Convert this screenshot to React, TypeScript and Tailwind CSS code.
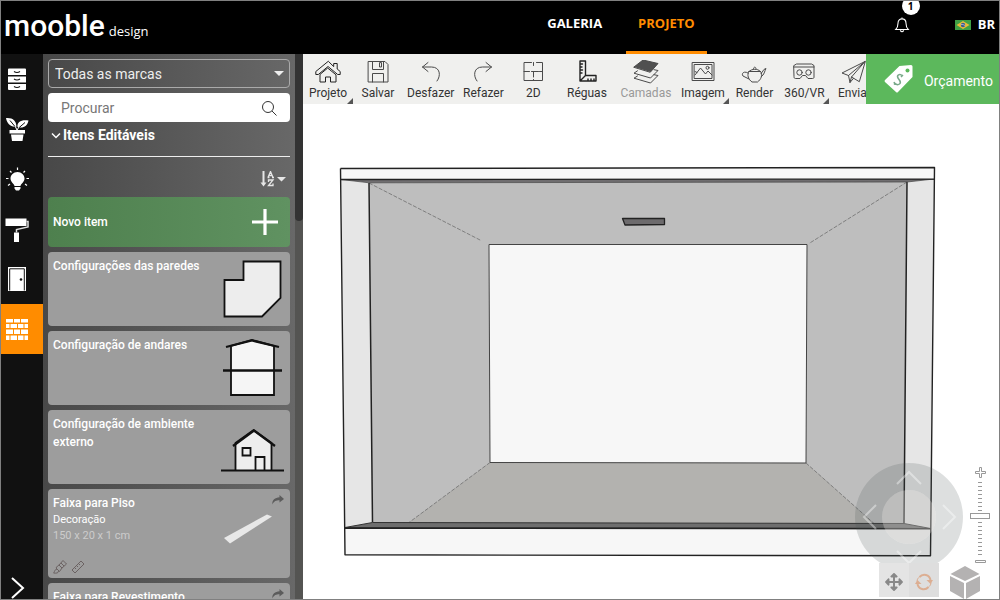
import type { ReactNode } from "react";
import { FaArrowsAlt } from "react-icons/fa";

type IconProps = {
	children: ReactNode;
	className?: string;
};

function LineIcon({ children, className = "stroke-[#4a4a4a]" }: IconProps) {
	return (
		<svg
			viewBox="0 0 26 24"
			className={`h-6 w-[26px] fill-none ${className}`}
			strokeWidth="1"
			strokeLinecap="round"
			strokeLinejoin="round"
			aria-hidden="true"
		>
			{children}
		</svg>
	);
}

type Tool = {
	label: string;
	icon: ReactNode;
	menu?: boolean;
	width?: string;
	disabled?: boolean;
};

const tools: Tool[] = [
	{
		label: "Projeto",
		menu: true,
		icon: (
			<LineIcon className="stroke-[#222]">
				<path d="M13 1.500.800 11.500v3h2.500L13 6.500l9.700 8h2.500v-3l-3-2.500V3.500h-3.500v2.700z" />
				<path d="M5 14.800V22h5.500v-5h5v5H21v-7.200L13 8.300z" />
			</LineIcon>
		),
	},
	{
		label: "Salvar",
		icon: (
			<LineIcon>
				<path d="M3.500 1.500H20l3 3V22H3.500z" />
				<path d="M7.500 1.500v8h11v-8M14.500 3v4h2V3zM7.500 22v-8.500h11V22" />
			</LineIcon>
		),
	},
	{
		label: "Desfazer",
		icon: (
			<LineIcon>
				<path d="M10 2.500 4.500 7l5.500 4.500M4.500 7h9c9 0 9.500 9 5.500 14" />
			</LineIcon>
		),
	},
	{
		label: "Refazer",
		icon: (
			<LineIcon>
				<path d="m16 2.500 5.500 4.500-5.500 4.500M21.500 7h-9c-9 0-9.500 9-5.500 14" />
			</LineIcon>
		),
	},
	{
		label: "2D",
		icon: (
			<LineIcon>
				<path d="M11.500 2.500H4V20.500h18.500V2.500h-6M13.500 2.500v3M4 11.500h5.500M11.500 11.500h7M13.500 11.500V17M13.500 19.500v1M19.500 11.500h3" />
			</LineIcon>
		),
	},
	{
		label: "Réguas",
		width: "min-w-[57px]",
		icon: (
			<LineIcon className="stroke-[#222] stroke-[1.4]">
				<path d="M6 1h5.500v14.500H22V21H6zM6 21l5.500-5.500M6 4h2.500M6 7h2M6 10h2.500M6 13h2M14 21v-2M17 21v-2M20 21v-2" />
			</LineIcon>
		),
	},
	{
		label: "Camadas",
		disabled: true,
		width: "min-w-[61px]",
		icon: (
			<LineIcon>
				<path d="m1 7 9-7 15 3.500L17.500 12z" fill="#505050" />
				<path d="m4.500 10.800-3.500 2.400L17.500 18l7.500-7.500-4-.8" />
				<path d="m4.500 16-3.500 2.200L17.500 23l7.500-7.500-4-.8" />
			</LineIcon>
		),
	},
	{
		label: "Imagem",
		menu: true,
		width: "min-w-[53px]",
		icon: (
			<LineIcon>
				<path d="M2.500 2.500h21.500v18H2.500zM4.500 4.500h17.500v14H4.500z" />
				<path d="m5 15 5.500-7 5 6 2.500-3 4 4M5 11.500l2 1" />
				<circle cx="17.500" cy="7.800" r="1.500" />
			</LineIcon>
		),
	},
	{
		label: "Render",
		icon: (
			<LineIcon>
				<path d="M8 11.500c3-3 8.500-3 11.500 0 2.500 3.500.500 8-3 10.500h-5.500c-3.500-2.500-5.500-7-3-10.500zM8 11.500h11.500M12.500 9c-.500-2.500 3-2.500 2.500 0" />
				<path d="M20 13.500c2-.500 1.500-4.500 5-5-1.500 2.500-1.500 6.500-4.700 8M7 13c-4-2.500-7 .500-5 3l6 3" />
			</LineIcon>
		),
	},
	{
		label: "360/VR",
		menu: true,
		icon: (
			<LineIcon>
				<path d="M3 5.500 5.500 4h15L23 5.500V17c0 1-.500 1.500-1.500 1.500H17l-2.500-3h-3l-2.500 3H4.500C3.500 18.500 3 18 3 17zM3 7h20" />
				<circle cx="8.500" cy="12.500" r="2.700" />
				<circle cx="17.500" cy="12.500" r="2.700" />
			</LineIcon>
		),
	},
	{
		label: "Enviar",
		icon: (
			<LineIcon>
				<path d="M24 1.500 1 13l6.500 2.500L24 1.500 10.500 17 18 21.500zM7.500 15.500 9 22.500l3.500-4.200M9 22.500l1.500-5.500" />
			</LineIcon>
		),
	},
];

const categories: { label: string; icon: ReactNode; active?: boolean }[] = [
	{
		label: "Móveis",
		icon: (
			<>
				<path
					d="M4 1.500h16q1 0 1 1V8H3V2.500q0-1 1-1zM3 9.500h18v6H3zM3 17h18v5q0 1-1 1H4q-1 0-1-1z"
					fill="#fff"
				/>
				<path
					d="M9 4.500q3 2 6 0M9 12q3 2 6 0M9 19.500q3 2 6 0"
					fill="none"
					stroke="#111"
					strokeWidth="1.200"
				/>
			</>
		),
	},
	{
		label: "Plantas",
		icon: (
			<>
				<path
					d="M1 1c7-.500 10 2.500 10.500 8.500C6 10.500 2 7 1 1zM12.500 10C12 5 16 2.500 23.500 3.500 22.500 9 18 12 12.500 10zM4.500 13h15.500v3.500H4.500zM6 17.500h12.500L17.500 24H7z"
					fill="#fff"
				/>
				<path d="m5 3.500 7 8.500v1M20 5.500 12.500 12" fill="none" stroke="#111" strokeWidth="1" />
				<path d="m10 9 2 4 2-3" fill="none" stroke="#fff" />
			</>
		),
	},
	{
		label: "Iluminação",
		icon: (
			<>
				<path
					d="M12.500 5c-4 0-7 3-7 6.500 0 3.500 3.500 5 4 7.500h6c.500-2.500 4-4 4-7.500 0-3.500-3-6.500-7-6.500zM9.500 20h6v1.500l-1.500 2h-3l-1.500-2z"
					fill="#fff"
				/>
				<path
					d="M12.500 3V.500M6.500 5.500 5 4M18.500 5.500 20 4M3.500 11.500H1M21.500 11.500H24M5 17l-2 1.500M20 17l2 1.500"
					stroke="#fff"
					strokeWidth="1.200"
				/>
			</>
		),
	},
	{
		label: "Pintura",
		icon: (
			<>
				<path d="M.500 1.500h21V9H.500zM9 15.500h5V25H9z" fill="#fff" />
				<path d="M21.500 4.500H23V10l-11.500 2.500v3" fill="none" stroke="#ddd" strokeWidth="1.500" />
			</>
		),
	},
	{
		label: "Portas",
		icon: (
			<>
				<path d="M3 0h18v24H3z" fill="#fff" />
				<path d="M4.700 23.500V1.800h14.600v21.700" fill="none" stroke="#111" />
				<circle cx="16" cy="12.500" r="1.300" fill="#111" />
			</>
		),
	},
	{
		label: "Construção",
		active: true,
		icon: (
			<path
				d="M1 2h7v3.500H1zM9 2h6v3.500H9zM16 2h7v3.500h-7zM1 7h3.500v4H1zM5.500 7H12v4H5.500zM13 7h5.500v4H13zM19.500 7H23v4h-3.500zM1 12.500h7V17H1zM9 12.500h6V17H9zM16 12.500h7V17h-7zM1 18.500h3.500V23H1zM5.500 18.500H12V23H5.500zM13 18.500h5.500V23H13zM19.500 18.500H23V23h-3.500z"
				fill="#fff"
			/>
		),
	},
];

function Header() {
	return (
		<header className="flex h-[53px] shrink-0 items-stretch bg-black text-white">
			<a href="#" className="flex items-baseline gap-1 pl-[3px] pt-1 whitespace-nowrap">
				<span className="text-[30px] leading-[42px] font-medium">mooble</span>
				<span className="font-['Open_Sans'] text-[13px]">design</span>
			</a>
			<nav className="mr-[187px] ml-auto flex gap-3 font-['Open_Sans'] text-[13px] font-bold">
				<a href="#galeria" className="flex items-center px-3 pb-2">
					GALERIA
				</a>
				<a
					href="#projeto"
					className="flex items-center border-b-3 border-[#ff8c00] px-3 pb-[5px] text-[#ff8c00]"
				>
					PROJETO
				</a>
			</nav>
			<div className="flex items-center gap-[45px] pr-1 pb-1.5">
				<button type="button" aria-label="Notificações" className="relative">
					<svg viewBox="0 0 18 18" className="size-4 fill-none stroke-white" strokeWidth="1.200">
						<path d="M9 .500v1.500M2 14c2-2 2.500-4 2.500-7 0-6.500 9-6.500 9 0 0 3 .500 5 2.500 7zM7 15q2 3 4 0" />
					</svg>
					<span className="absolute -top-5 left-2 size-[18px] rounded-full bg-white text-center font-['Open_Sans'] text-[10px] leading-[18px] font-bold text-black">
						1
					</span>
				</button>
				<button
					type="button"
					className="flex items-center gap-[7px] font-['Open_Sans'] text-[13px] font-bold"
				>
					<svg viewBox="0 0 16 10" className="h-2.5 w-4" aria-hidden="true">
						<path d="M0 0h16v10H0z" fill="#3fa045" />
						<path d="m8 1 6.500 4L8 9 1.500 5z" fill="#e8b93a" />
						<circle cx="8" cy="5" r="2.200" fill="#3a5d91" />
						<path d="M6 4.500q2-.500 4 1" stroke="#dde" strokeWidth=".6" fill="none" />
					</svg>
					BR
				</button>
			</div>
		</header>
	);
}

function Categories() {
	return (
		<nav className="flex w-[42px] shrink-0 flex-col bg-[#111]">
			{categories.map((category) => (
				<button
					key={category.label}
					type="button"
					aria-label={category.label}
					className={`flex h-[50px] shrink-0 items-center pl-1 ${category.active ? "bg-[#ff8c00]" : ""}`}
				>
					<svg viewBox="0 0 24 24" className="size-6 overflow-visible">
						{category.icon}
					</svg>
				</button>
			))}
			<button type="button" aria-label="Expandir" className="mt-auto pl-2">
				<svg
					viewBox="0 0 16 22"
					className="h-[22px] w-4 fill-none stroke-white"
					strokeWidth="2"
				>
					<path d="m3 1 11 10L3 21" />
				</svg>
			</button>
		</nav>
	);
}

type CardProps = {
	title: string;
	children?: ReactNode;
	picture: ReactNode;
};

function ConfigCard({ title, picture }: CardProps) {
	return (
		<li className="flex h-[74px] shrink-0 items-center justify-between rounded bg-[#9d9d9d] pr-[5px] pl-[5px]">
			<h3 className="w-[150px] self-start pt-[5px] text-xs leading-[18px] font-medium">
				{title}
			</h3>
			<svg
				viewBox="0 0 64 64"
				className="size-16"
				fill="#ededed"
				stroke="#111"
				strokeWidth="1.800"
				aria-hidden="true"
			>
				{picture}
			</svg>
		</li>
	);
}

function ProductCard({ title, children, picture }: CardProps) {
	return (
		<li className="flex h-[89px] shrink-0 justify-between rounded bg-[#9d9d9d] pr-1 pl-[5px]">
			<div className="flex flex-col pt-[5px] whitespace-nowrap">
				<h3 className="text-xs leading-[18px] font-medium">{title}</h3>
				{children}
			</div>
			<div className="flex flex-col items-end">
				<button type="button" aria-label="Compartilhar" className="pt-1.5 pr-0.5">
					<svg viewBox="0 0 12 10" className="h-2.5 w-3 fill-[#5c5c5c]">
						<path d="M7.500 0 12 4 7.500 7.500V5.200C4 5.200 2 6 .300 9.500 0 5 3 2.500 7.500 2.200z" />
					</svg>
				</button>
				{picture}
			</div>
		</li>
	);
}

function Strip() {
	return (
		<svg viewBox="0 0 64 40" className="h-10 w-16" aria-hidden="true">
			<path d="m2 33 43-23.500 5 2L8 38.500z" fill="#e8e8e8" />
		</svg>
	);
}

function Catalog() {
	return (
		<aside className="flex w-[260px] shrink-0 text-white">
			<div className="flex min-w-0 flex-1 flex-col overflow-hidden bg-linear-to-r from-[#484848] to-[#686868] px-[5px] pt-[5px]">
				<div className="relative shrink-0">
					<select
						aria-label="Marca"
						className="h-[29px] w-full appearance-none rounded border border-[#aaa] px-1.5 text-sm text-[#eee]"
					>
						<option>Todas as marcas</option>
					</select>
					<svg
						viewBox="0 0 10 5"
						className="pointer-events-none absolute top-3 right-1.5 h-[5px] w-2.5 fill-[#eee]"
					>
						<path d="M0 0h10L5 5z" />
					</svg>
				</div>
				<div className="mt-[5px] flex h-[29px] shrink-0 items-center rounded bg-white pr-3 pl-[13px]">
					<input
						type="search"
						aria-label="Procurar"
						placeholder="Procurar"
						className="min-w-0 flex-1 text-sm text-[#333] outline-none placeholder:text-[#777]"
					/>
					<svg
						viewBox="0 0 18 18"
						className="size-[18px] fill-none stroke-[#333]"
						strokeWidth="1"
						aria-hidden="true"
					>
						<circle cx="8" cy="8" r="5.500" />
						<path d="m12 12 4.500 4.500" />
					</svg>
				</div>
				<button
					type="button"
					className="flex h-[35px] shrink-0 items-start gap-0.5 border-b border-[#eee] pt-1 pl-[3px] text-sm leading-[18px] font-bold"
				>
					<svg
						viewBox="0 0 10 18"
						className="h-[18px] w-2.5 fill-none stroke-white"
						strokeWidth="1.500"
						aria-hidden="true"
					>
						<path d="m1 7.500 4 4 4-4" />
					</svg>
					Itens Editáveis
				</button>
				<div className="flex h-10 shrink-0 items-center justify-end pt-1 pr-1">
					<button type="button" aria-label="Ordenar">
						<svg viewBox="0 0 26 16" className="h-4 w-[26px] fill-[#e6e6e6]">
							<path d="M2.500 0h2v11.500h2L3.500 15.500.500 11.500h2zM17 6h9l-4.500 4.500z" />
							<path
								d="m8 6.500 2.500-6 2.500 6M9 4.500h3M7.500 6.500h2M12 6.500h2M8.500 11V9h4.500l-4.500 5.500H13v-2"
								fill="none"
								stroke="#e6e6e6"
								strokeWidth="1.300"
							/>
						</svg>
					</button>
				</div>
				<button
					type="button"
					className="flex h-[50px] shrink-0 items-center justify-between rounded bg-linear-to-r from-[#4e804e] to-[#609261] pr-3 pl-[5px] text-xs font-medium"
				>
					Novo item
					<svg
						viewBox="0 0 26 26"
						className="size-[26px] stroke-white"
						strokeWidth="3.200"
						aria-hidden="true"
					>
						<path d="M13 0v26M0 13h26" />
					</svg>
				</button>
				<ul className="mt-[5px] flex flex-col gap-[5px]">
					<ConfigCard
						title="Configurações das paredes"
						picture={<path d="M22.500 4.500h37v36.500L41 59.500H3.500V23h19z" />}
					/>
					<ConfigCard
						title="Configuração de andares"
						picture={
							<>
								<path d="M10 10v49h43V10L31 4z" fill="#f5f5f5" />
								<path d="M5 11 31 4.500 58 11M2 34.500h59" strokeWidth="2.300" fill="none" />
							</>
						}
					/>
					<ConfigCard
						title="Configuração de ambiente externo"
						picture={
							<>
								<path d="M14.500 55V28l18-13 18 13v27" />
								<path d="m12 31 21-15.500L54 31" strokeWidth="2.300" fill="none" />
								<path d="M0 55.500h63M34.500 55V42h9v13M21.500 33h8v7.500h-8z" />
							</>
						}
					/>
					<ProductCard title="Faixa para Piso" picture={<Strip />}>
						<p className="text-[11px] leading-4">Decoração</p>
						<p className="text-[11px] leading-4 text-[#ccc]">150 x 20 x 1 cm</p>
						<div className="mt-auto flex gap-1 pb-1">
							<svg viewBox="0 0 14 14" className="size-3.5 fill-none stroke-[#6b6262]">
								<path d="m6 5 4-4.500L13.500 4 9 8zM6 5 4.500 6 3 8l3.500 3.500L9 8M4.500 9.500C1 9 2 12 .500 13c3 .500 5 0 5-2M8 3l3 3" />
							</svg>
							<svg viewBox="0 0 14 14" className="size-3.5 fill-none stroke-[#6b6262]">
								<path d="m1 10 9-9 3 3-9 9zM4 8l1 1M6 6l1 1M8 4l1 1" />
							</svg>
						</div>
					</ProductCard>
					<ProductCard title="Faixa para Revestimento" picture={<Strip />} />
				</ul>
			</div>
			<div className="w-2 bg-[#545452]">
				<div className="h-[167px] rounded-b bg-[#333]" />
			</div>
		</aside>
	);
}

function Toolbar() {
	return (
		<div className="flex h-[50px] shrink-0 bg-[#f0f0ee]">
			<div className="flex min-w-0 flex-1 overflow-hidden">
				{tools.map((tool) => (
					<button
						key={tool.label}
						type="button"
						disabled={tool.disabled}
						className={`relative flex shrink-0 flex-col items-center px-1 pt-1.5 text-xs leading-[18px] ${
							tool.width ?? "min-w-[50px]"
						} ${tool.disabled ? "text-[#999]" : "text-[#333]"}`}
					>
						{tool.icon}
						{tool.label}
						{tool.menu && (
							<svg viewBox="0 0 6 6" className="absolute right-0 bottom-0 size-1.5 fill-[#555]">
								<path d="M6 0v6H0z" />
							</svg>
						)}
					</button>
				))}
			</div>
			<button
				type="button"
				className="flex w-[133px] shrink-0 items-center justify-between bg-[#5cb85c] pt-1 pr-1.5 pl-[18px] text-sm text-white"
			>
				<svg viewBox="0 0 30 30" className="mb-1 size-[30px]" aria-hidden="true">
					<path d="M15.500 2 27 1q1.500 0 1.500 1.500V13L14 28q-1 1-2 0L1 18q-1-1 0-2z" fill="#fff" />
					<circle cx="23.500" cy="6.500" r="2" fill="#5cb85c" />
					<path
						d="M18.500 12c-3-3-6-.500-4.500 2s4 4 1.500 6c-2 1.500-5 0-5.500-2M19 11l-2 2M10 20.500l1.500-1.500"
						fill="none"
						stroke="#79a98a"
						strokeWidth="1.500"
					/>
				</svg>
				Orçamento
			</button>
		</div>
	);
}

function Room() {
	return (
		<svg
			viewBox="303 104 696 495"
			className="block size-full"
			role="img"
			aria-label="Ambiente"
			strokeLinejoin="round"
		>
			<path d="M369 182.500 907 182l-3 341.500-531.500-1z" fill="#bebebe" />
			<path d="m490 462.500 316 .500 68 60.500-465-1z" fill="#b3b2af" />
			<path d="M489 244.500h318l-1 218.500-316-.500z" fill="#f7f7f7" stroke="#444" />
			<path
				d="m369 183 112 57.500M907 182l-98 61.500M490 462.500l-81 60M806 463l68 60.500"
				fill="none"
				stroke="#777"
				strokeDasharray="4 1.500"
				strokeWidth=".9"
			/>
			<path d="m341 179.500 28 3.500 3.500 339.500-27.500 5z" fill="#e6e6e6" />
			<path d="m934 179-27 3-3 341.500 26.500 5z" fill="#e6e6e6" />
			<path d="m369 183 3.500 339.500M907 182l-3 341.500" stroke="#222" strokeWidth="1.500" />
			<path d="m341 179.500 593-.500-27 3-538 .800z" fill="#706e70" stroke="#444" strokeWidth=".7" />
			<path d="m345 527.500 27.500-5 531.500 1 26.500 5z" fill="#6e6e6e" stroke="#333" />
			<path d="m340.500 168.500 594-1v11.500l-593.500.500z" fill="#f8f8f8" />
			<path d="m345 528 585.500.800v27l-585.500-1z" fill="#f7f7f7" />
			<path
				d="m340.500 168.500 594-1-4 388.300-585.500-1-4.500-386.300M341 179.500l593-.500M345 528l585.500.800"
				fill="none"
				stroke="#222"
				strokeWidth="1.400"
			/>
			<path
				d="M622.500 218.500h42v6l-39.500.500z"
				fill="#6d6b6d"
				stroke="#222"
				strokeWidth="1.300"
			/>
		</svg>
	);
}

function ViewControls() {
	return (
		<div className="absolute right-[9px] bottom-0 flex items-end gap-2.5">
			<div className="flex flex-col items-center">
				<svg viewBox="0 0 108 108" className="-mx-6 -mb-2 size-[108px]" role="img" aria-label="Orbitar">
					<path
						d="M54 0a54 54 0 0 1 0 108 54 54 0 0 1 0-108zM54 27a27 27 0 0 0 0 54 27 27 0 0 0 0-54z"
						fill="#474f53"
						fillOpacity=".185"
					/>
					<circle cx="54" cy="54" r="27" fill="#bcbcba" fillOpacity=".43" />
					<path
						d="m42 21 12-12 12 12M42 88l12 12 12-12M21 42 9 54l12 12M88 42l12 12-12 12"
						fill="none"
						stroke="#fff"
						strokeOpacity=".4"
						strokeWidth="2"
					/>
				</svg>
				<div className="mb-0.5 flex">
					<button
						type="button"
						aria-label="Mover"
						className="grid h-[34px] w-[30px] place-items-center bg-[#e4e4e4] pt-1 text-[#888]"
					>
						<FaArrowsAlt className="size-[18px]" />
					</button>
					<button
						type="button"
						aria-label="Girar"
						className="grid h-[34px] w-[30px] place-items-center bg-[#dedede] pt-1"
					>
						<svg viewBox="0 0 18 18" className="size-[18px] fill-none stroke-[#dcae92]" strokeWidth="2">
							<path d="M4.500 4C8 0 14.500 1.500 15.500 7M13.500 14C10 18 3.500 16.500 2.500 11" />
							<path d="M11.500 7H18l-2.500 4zM0 11h6.500L2.500 7z" fill="#dcae92" stroke="none" />
							<path d="M2 8.500C2.200 6 3 5 4.500 4M16 9.500c-.200 2.500-1 3.500-2.500 4.500" strokeWidth="1" />
						</svg>
					</button>
				</div>
			</div>
			<div className="flex w-[41px] flex-col">
				<div className="flex w-5 flex-col items-center self-end">
					<button type="button" aria-label="Aproximar">
						<svg viewBox="0 0 11 11" className="block size-[11px] fill-white stroke-[#999]">
							<path d="M4.500.500h2v4h4v2h-4v4h-2v-4h-4v-2h4z" />
						</svg>
					</button>
					<input
						type="range"
						aria-label="Zoom"
						defaultValue={54}
						className="my-px h-[82px] w-5 appearance-none bg-[repeating-linear-gradient(to_bottom,#999_0_1px,transparent_1px_4px)] bg-size-[4px_74px] bg-center bg-no-repeat [direction:rtl] [writing-mode:vertical-lr] [&::-webkit-slider-thumb]:h-1.5 [&::-webkit-slider-thumb]:w-5 [&::-webkit-slider-thumb]:appearance-none [&::-webkit-slider-thumb]:border [&::-webkit-slider-thumb]:border-[#999] [&::-webkit-slider-thumb]:bg-white"
					/>
					<button type="button" aria-label="Afastar">
						<svg viewBox="0 0 11 3" className="block h-[3px] w-[11px] fill-white stroke-[#999]">
							<path d="M.500.500h10v2H.500z" />
						</svg>
					</button>
				</div>
				<button type="button" aria-label="Vista 3D" className="mt-0.5 self-start">
					<svg viewBox="0 0 32 34" className="block h-[34px] w-8 fill-[#b4b2b2]">
						<path d="m16 1 14.500 8L16 16 1.500 9zM1 11l14 7v16L1 26zM31 11l-14 7v16l14-8z" />
					</svg>
				</button>
			</div>
		</div>
	);
}

export default function App() {
	return (
		<div className="flex h-screen flex-col overflow-hidden border border-[#808080] bg-white font-[Roboto,sans-serif]">
			<Header />
			<div className="flex min-h-0 flex-1">
				<Categories />
				<Catalog />
				<main className="flex min-w-0 flex-1 flex-col">
					<Toolbar />
					<div className="relative min-h-0 flex-1">
						<Room />
						<ViewControls />
					</div>
				</main>
			</div>
		</div>
	);
}
